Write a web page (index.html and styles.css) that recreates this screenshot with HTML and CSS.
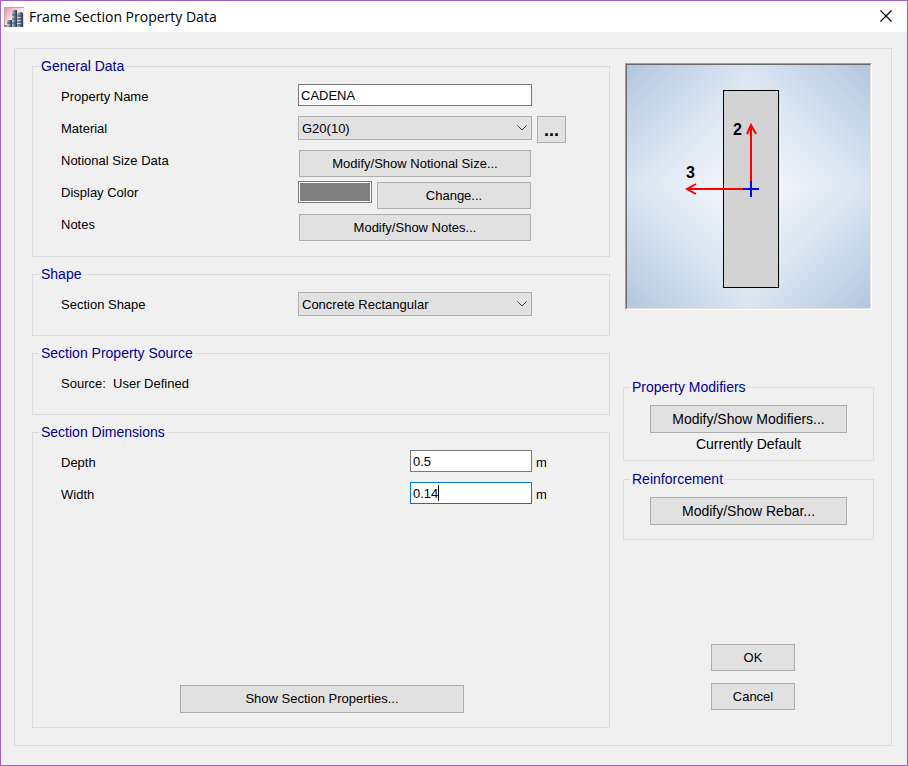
FILE: index.html
```html
<!DOCTYPE html>
<html lang="en">
<head>
<meta charset="utf-8">
<title>Frame Section Property Data</title>
<link rel="stylesheet" href="styles.css">
</head>
<body>
<header class="titlebar">
  <svg class="app-icon" viewBox="0 0 20 20" aria-hidden="true">
    <defs>
      <linearGradient id="sky" x1="0" y1="0" x2="1" y2="1">
        <stop offset="0" stop-color="#f08aa6"/><stop offset=".5" stop-color="#fbe3ea"/><stop offset="1" stop-color="#d9cfd9"/>
      </linearGradient>
      <linearGradient id="tower" x1="0" y1="0" x2="1" y2="0">
        <stop offset="0" stop-color="#b9c6d4"/><stop offset=".5" stop-color="#6d7c90"/><stop offset="1" stop-color="#2d3748"/>
      </linearGradient>
    </defs>
    <path d="M0 0h20v20H0z" fill="url(#sky)"/>
    <path d="M.5 20V.5H20" stroke="#b5a3b0" fill="none"/>
    <path d="M8 4l2-1h3v17H8z" fill="url(#tower)"/>
    <path d="M13 6l4-1 2 1v14h-6z" fill="url(#tower)"/>
    <path d="M3 13h5v7H3z" fill="url(#tower)"/>
    <path d="M13 9h6M13 12h6M13 15h6M13 18h6M8 8h4M8 12h4M8 16h4M3 16h4" stroke="#2f3a4c" stroke-opacity=".6"/>
    <path d="M13 10.500h4M13 13.500h4M13 16.500h4M8 10h2M8 14h2M3 18h3" stroke="#e3e9f0" stroke-opacity=".7"/>
    <path d="M0 18h3v2H0z" fill="#7b8494"/>
  </svg>
  <h1 class="title">Frame Section Property Data</h1>
  <button class="close" type="button" aria-label="Close">
    <svg viewBox="0 0 12 12" aria-hidden="true"><path d="M.5 .5l11 11M11.5 .5l-11 11" stroke="#000" stroke-width="1.2" fill="none"/></svg>
  </button>
</header>

<form class="panel">
  <div class="main">
    <fieldset class="group group-general">
      <legend>General Data</legend>
      <div class="row">
        <label class="label" for="name">Property Name</label>
        <input class="text wide" id="name" type="text" value="CADENA">
      </div>
      <div class="row">
        <label class="label" for="material">Material</label>
        <div class="combo">
          <select id="material"><option>G20(10)</option></select>
          <svg class="chevron" viewBox="0 0 10 6" aria-hidden="true"><path d="M.5 .5L5 5L9.500 .5" stroke="#404040" fill="none"/></svg>
        </div>
        <button class="btn more" type="button" aria-label="Edit materials">...</button>
      </div>
      <div class="row">
        <span class="label">Notional Size Data</span>
        <button class="btn field-btn" type="button">Modify/Show Notional Size...</button>
      </div>
      <div class="row">
        <span class="label">Display Color</span>
        <span class="swatch"></span>
        <button class="btn change" type="button">Change...</button>
      </div>
      <div class="row">
        <span class="label">Notes</span>
        <button class="btn field-btn" type="button">Modify/Show Notes...</button>
      </div>
    </fieldset>

    <fieldset class="group">
      <legend>Shape</legend>
      <div class="row">
        <label class="label" for="shape">Section Shape</label>
        <div class="combo">
          <select id="shape"><option>Concrete Rectangular</option></select>
          <svg class="chevron" viewBox="0 0 10 6" aria-hidden="true"><path d="M.5 .5L5 5L9.500 .5" stroke="#404040" fill="none"/></svg>
        </div>
      </div>
    </fieldset>

    <fieldset class="group">
      <legend>Section Property Source</legend>
      <div class="row"><span class="label">Source:&nbsp; User Defined</span></div>
    </fieldset>

    <fieldset class="group group-dimensions">
      <legend>Section Dimensions</legend>
      <div class="row">
        <label class="label label-wide" for="depth">Depth</label>
        <input class="text narrow" id="depth" type="text" value="0.5">
        <span class="unit">m</span>
      </div>
      <div class="row">
        <label class="label label-wide" for="width">Width</label>
        <span class="text narrow editing">
          <input id="width" type="text" value="0.14">
          <i class="caret"></i>
        </span>
        <span class="unit">m</span>
      </div>
      <button class="btn show-props" type="button">Show Section Properties...</button>
    </fieldset>
  </div>

  <div class="side">
    <div class="preview">
      <svg viewBox="0 0 243 243" role="img" aria-label="Section preview">
        <rect x="96.500" y="25.500" width="55" height="197" fill="#d3d3d3" stroke="#000"/>
        <g stroke="#f00" stroke-width="2" fill="none">
          <path d="M124 124V61M120 69l4-9l5 9"/>
          <path d="M124 124H60M69 119l-9 5l9 5"/>
        </g>
        <path d="M116 124h16M124 116v16" stroke="#00f" stroke-width="2"/>
        <text x="106" y="70">2</text>
        <text x="59" y="113">3</text>
      </svg>
    </div>

    <fieldset class="group side-group">
      <legend>Property Modifiers</legend>
      <button class="btn side-btn" type="button">Modify/Show Modifiers...</button>
      <p class="status">Currently Default</p>
    </fieldset>

    <fieldset class="group side-group rebar">
      <legend>Reinforcement</legend>
      <button class="btn side-btn" type="button">Modify/Show Rebar...</button>
    </fieldset>

    <div class="actions">
      <button class="btn" type="button">OK</button>
      <button class="btn" type="button">Cancel</button>
    </div>
  </div>
</form>
</body>
</html>
```
FILE: styles.css
```css
* { box-sizing: border-box; }

body {
  margin: 0;
  min-height: 100vh;
  display: flex;
  flex-direction: column;
  border: 1px solid #9d62c4;
  background: #f0f0f0;
  color: #000;
  font: 13px/16px "Liberation Sans", Arial, sans-serif;
}

button, input, select { font: inherit; color: inherit; border-radius: 0; }

.titlebar {
  display: flex;
  align-items: center;
  height: 31px;
  padding: 0 15px 0 3px;
  background: #fff;
}
.app-icon { width: 20px; height: 20px; }
.title {
  margin: 0 auto 0 5px;
  font: 14px/20px "Open Sans", "Noto Sans", sans-serif;
}
.close {
  display: flex;
  padding: 0 0 1px;
  border: 0;
  background: none;
}
.close svg { width: 12px; height: 12px; }

.panel {
  flex: 1;
  display: flex;
  gap: 13px;
  margin: 16px 15px 19px 13px;
  padding: 9px 17px 17px;
  border: 1px solid #dcdcdc;
}
.main {
  flex: 1;
  display: flex;
  flex-direction: column;
  gap: 9px;
}
.side {
  flex: none;
  width: 251px;
  display: flex;
  flex-direction: column;
}

.group {
  min-width: 0;
  margin: 0;
  padding: 7px 0 14px;
  border: 1px solid #dcdcdc;
}
.group legend {
  margin-left: 6px;
  padding: 0 2px;
  color: #00008b;
  font-size: 14px;
}
.group-general { padding-bottom: 15px; }
.group-dimensions {
  flex: 1;
  position: relative;
}

.row {
  display: flex;
  align-items: center;
  height: 32px;
  padding-left: 28px;
}
.label { width: 237px; }
.label-wide { width: 349px; }
.unit { margin-left: 4px; }

.text {
  height: 22px;
  margin-bottom: 4px;
  padding: 0 2px;
  border: 1px solid #7a7a7a;
  background: #fff;
  outline: 0;
}
.wide { width: 234px; }
.narrow { width: 122px; }
.editing {
  display: flex;
  align-items: center;
  border-color: #0078d7;
}
.editing input {
  width: 25px;
  height: 20px;
  padding: 0;
  border: 0;
  outline: 0;
}
.caret { width: 1px; height: 16px; background: #000; }

.combo {
  position: relative;
  width: 234px;
  margin-bottom: 2px;
}
.combo select {
  display: block;
  width: 100%;
  height: 24px;
  padding: 1px 3px 0;
  appearance: none;
  border: 1px solid #adadad;
  background: #e1e1e1;
}
.chevron {
  position: absolute;
  right: 5px;
  top: 9px;
  width: 10px;
  height: 6px;
  pointer-events: none;
}

.btn {
  height: 27px;
  padding: 0;
  border: 1px solid #adadad;
  background: #e1e1e1;
}
.row .btn { align-self: flex-end; }
.field-btn { width: 232px; margin-left: 1px; }
.change { width: 154px; margin-left: 5px; }
.row .more {
  width: 29px;
  margin: 0 0 0 5px;
  padding-top: 2px;
  align-self: center;
  font-size: 18px;
  font-weight: bold;
}
.swatch {
  width: 74px;
  height: 22px;
  margin-bottom: 2px;
  border: 1px solid #7a7a7a;
  background: #808080;
  box-shadow: inset 0 0 0 1px #fff;
}
.show-props {
  position: absolute;
  left: 147px;
  bottom: 14px;
  width: 284px;
  height: 28px;
}

.preview {
  width: 247px;
  margin: 5px 2px 69px;
  border: 1px solid;
  border-color: #a0a0a0 #fff #fff #a0a0a0;
}
.preview svg {
  display: block;
  width: 100%;
  border: 1px solid;
  border-color: #696969 #e3e3e3 #e3e3e3 #696969;
  background:
    linear-gradient(135deg, #b3c6e0, #dae4f0 50%, #f9fafd) 0 0 / 122px 122px,
    linear-gradient(225deg, #b3c6e0, #dae4f0 50%, #f9fafd) 100% 0 / 122px 122px,
    linear-gradient(45deg, #b3c6e0, #dae4f0 50%, #f9fafd) 0 100% / 122px 122px,
    linear-gradient(315deg, #b3c6e0, #dae4f0 50%, #f9fafd) 100% 100% / 122px 122px;
  background-repeat: no-repeat;
}
.preview text { font-size: 16px; font-weight: bold; }

.side-group {
  margin-bottom: 10px;
  padding: 10px 0 8px;
  font-size: 14px;
}
.rebar { padding-bottom: 14px; }
.side-btn {
  display: block;
  width: 197px;
  height: 28px;
  margin: 0 auto;
}
.status { margin: 3px 0 0; text-align: center; }

.actions {
  display: grid;
  gap: 12px;
  width: 84px;
  margin: auto 79px 18px auto;
}
```
